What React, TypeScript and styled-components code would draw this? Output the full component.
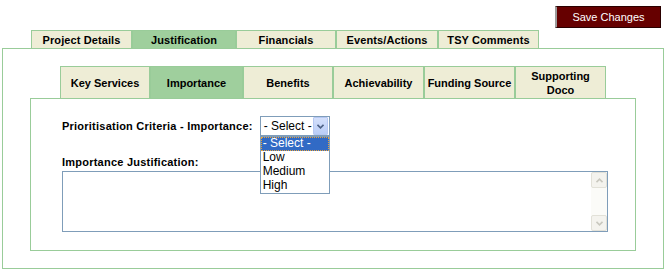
import React from "react";
import styled, { createGlobalStyle } from "styled-components";

const GlobalStyle = createGlobalStyle`
  html, body { margin: 0; padding: 0; background: #fff; }
  body { font-family: "Liberation Sans", Arial, sans-serif; color: #000; }
  * { box-sizing: border-box; }
`;

const GREEN_BORDER = "#99cc99";
const TAB_BG = "#eeedd6";
const TAB_ACTIVE = "#9fcf9d";

const Page = styled.div`
  width: 665px;
  height: 269px;
  display: flex;
  flex-direction: column;
`;

const TopBar = styled.div`
  height: 30px;
  display: flex;
  justify-content: flex-end;
  align-items: flex-start;
  padding: 6px 4px 0 0;
`;

const SaveButton = styled.button`
  width: 106px;
  height: 22px;
  background: #660000;
  color: #fff;
  font-family: "Liberation Sans", Arial, sans-serif;
  font-size: 11px;
  border: 1px solid #2a0000;
  border-left: 2px solid #9c9c9c;
  padding: 0;
  cursor: pointer;
`;

const OuterTabs = styled.div`
  display: flex;
  height: 18px;
  padding-left: 31px;
`;

const OuterTab = styled.div<{ $active?: boolean; $w: number }>`
  width: ${(p) => p.$w}px;
  height: 18px;
  border: 1px solid ${GREEN_BORDER};
  border-bottom: none;
  background: ${(p) => (p.$active ? TAB_ACTIVE : TAB_BG)};
  display: flex;
  align-items: center;
  justify-content: center;
  font-size: 11px;
  font-weight: bold;
  letter-spacing: 0.1px;
  padding-top: 1px;
  white-space: nowrap;
`;

const OuterPanel = styled.div`
  margin: 0 1px 0 2px;
  border: 1px solid ${GREEN_BORDER};
  padding: 17px 27px 17px 27px;
  display: flex;
  flex-direction: column;
`;

const InnerTabs = styled.div`
  display: flex;
  height: 32px;
  padding-left: 30px;
`;

const InnerTab = styled.div<{ $active?: boolean; $w: number }>`
  width: ${(p) => p.$w}px;
  height: 32px;
  border: 1px solid ${GREEN_BORDER};
  border-bottom: none;
  background: ${(p) => (p.$active ? TAB_ACTIVE : TAB_BG)};
  display: flex;
  align-items: center;
  justify-content: center;
  text-align: center;
  font-size: 11px;
  font-weight: bold;
  line-height: 14px;
  padding-top: 1px;
`;

const InnerPanel = styled.div`
  border: 1px solid ${GREEN_BORDER};
  height: 153px;
  padding: 17px 26px 18px 31px;
  display: flex;
  flex-direction: column;
`;

const CriteriaRow = styled.div`
  display: flex;
  align-items: center;
  height: 20px;
`;

const FieldLabel = styled.label`
  font-size: 11px;
  font-weight: bold;
  line-height: 14px;
  letter-spacing: 0.23px;
  white-space: nowrap;
`;

const SelectWrap = styled.div`
  position: relative;
  margin-left: 7px;
`;

const SelectBox = styled.div`
  width: 70px;
  height: 20px;
  border: 1px solid #7f9db9;
  background: #fff;
  display: flex;
  align-items: center;
`;

const SelectValue = styled.span`
  flex: 1;
  font-size: 12px;
  padding-left: 3px;
  white-space: nowrap;
  color: #000;
`;

const SelectArrow = styled.span`
  width: 15px;
  height: 18px;
  margin-right: 1px;
  border: 1px solid #b6c8f3;
  border-radius: 1px;
  background: linear-gradient(#d4e0fb, #b9cdf7);
  display: flex;
  align-items: center;
  justify-content: center;
`;

const OptionList = styled.ul`
  position: absolute;
  top: 20px;
  left: 0;
  width: 70px;
  margin: 0;
  padding: 0;
  list-style: none;
  border: 1px solid #7f9db9;
  background: #fff;
  z-index: 2;
`;

const OptionItem = styled.li<{ $selected?: boolean }>`
  height: 14px;
  line-height: 13px;
  font-size: 12px;
  padding-left: 2px;
  white-space: nowrap;
  background: ${(p) => (p.$selected ? "#316ac5" : "#fff")};
  color: ${(p) => (p.$selected ? "#fff" : "#000")};
  outline: ${(p) => (p.$selected ? "1px dotted #e8a33d" : "none")};
  outline-offset: -1px;
`;

const JustLabel = styled(FieldLabel)`
  display: block;
  margin-top: 19px;
`;

const TextBox = styled.div`
  margin-top: 2px;
  width: 546px;
  height: 61px;
  border: 1px solid #7f9db9;
  display: flex;
  background: #fff;
`;

const TextInput = styled.textarea`
  flex: 1;
  border: none;
  resize: none;
  outline: none;
  overflow: hidden;
  font-family: "Liberation Sans", Arial, sans-serif;
  font-size: 12px;
  padding: 2px;
`;

const ScrollBar = styled.div`
  width: 16px;
  display: flex;
  flex-direction: column;
  background: #fbfbf8;
`;

const ScrollBtn = styled.div`
  width: 16px;
  height: 16px;
  background: #f4f3ee;
  border: 1px solid #e2e1d8;
  border-radius: 2px;
  display: flex;
  align-items: center;
  justify-content: center;
`;

const ScrollTrack = styled.div`
  flex: 1;
`;

const Chevron = ({ up, color, size = 7 }: { up?: boolean; color: string; size?: number }) => (
  <svg width={size} height={size - 2} viewBox="0 0 7 5">
    <path
      d={up ? "M0.5 4.2 L3.5 1.2 L6.5 4.2" : "M0.5 0.8 L3.5 3.8 L6.5 0.8"}
      fill="none"
      stroke={color}
      strokeWidth={1.6}
    />
  </svg>
);

const outerTabs = [
  { label: "Project Details", w: 101 },
  { label: "Justification", w: 104, active: true },
  { label: "Financials", w: 100 },
  { label: "Events/Actions", w: 102 },
  { label: "TSY Comments", w: 101 },
];

const innerTabs = [
  { label: "Key Services", w: 90 },
  { label: "Importance", w: 93, active: true },
  { label: "Benefits", w: 90 },
  { label: "Achievability", w: 91 },
  { label: "Funding Source", w: 91 },
  { label: "Supporting Doco", w: 91 },
];

const options = ["- Select -", "Low", "Medium", "High"];

export default function App() {
  return (
    <Page>
      <GlobalStyle />
      <TopBar>
        <SaveButton>Save Changes</SaveButton>
      </TopBar>
      <OuterTabs>
        {outerTabs.map((t) => (
          <OuterTab key={t.label} $w={t.w} $active={t.active}>
            {t.label}
          </OuterTab>
        ))}
      </OuterTabs>
      <OuterPanel>
        <InnerTabs>
          {innerTabs.map((t) => (
            <InnerTab key={t.label} $w={t.w} $active={t.active}>
              {t.label === "Supporting Doco" ? (
                <span>
                  Supporting
                  <br />
                  Doco
                </span>
              ) : (
                t.label
              )}
            </InnerTab>
          ))}
        </InnerTabs>
        <InnerPanel>
          <CriteriaRow>
            <FieldLabel>Prioritisation Criteria - Importance:</FieldLabel>
            <SelectWrap>
              <SelectBox>
                <SelectValue>- Select -</SelectValue>
                <SelectArrow>
                  <Chevron color="#4d6185" />
                </SelectArrow>
              </SelectBox>
              <OptionList>
                {options.map((o, i) => (
                  <OptionItem key={o} $selected={i === 0}>
                    {o}
                  </OptionItem>
                ))}
              </OptionList>
            </SelectWrap>
          </CriteriaRow>
          <JustLabel>Importance Justification:</JustLabel>
          <TextBox>
            <TextInput />
            <ScrollBar>
              <ScrollBtn>
                <Chevron up color="#c9c8bf" />
              </ScrollBtn>
              <ScrollTrack />
              <ScrollBtn>
                <Chevron color="#c9c8bf" />
              </ScrollBtn>
            </ScrollBar>
          </TextBox>
        </InnerPanel>
      </OuterPanel>
    </Page>
  );
}
